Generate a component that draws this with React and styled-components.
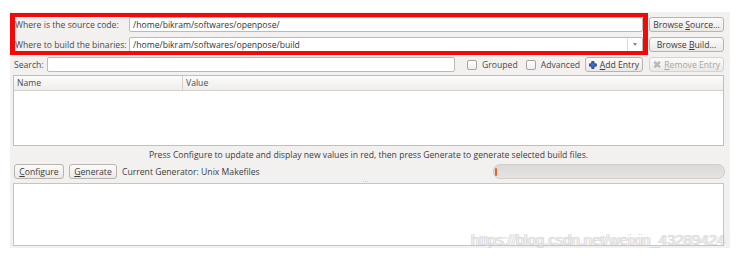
import React from "react";
import styled, { createGlobalStyle } from "styled-components";

const FONT = `"Open Sans", "Noto Sans", "DejaVu Sans", sans-serif`;
const FS = "8.65px";

const Global = createGlobalStyle`
  html, body { margin: 0; padding: 0; background: #ffffff; }
  body { font-family: ${FONT}; font-size: ${FS}; color: #3c3c3c; }
  * { box-sizing: border-box; }
`;

const Page = styled.div`
  position: relative;
  width: 750px;
  height: 258px;
  padding: 12px 0 0 10px;
`;

const Window = styled.div`
  width: 720px;
  height: 236px;
  background: #f2f1f0;
  padding: 5px 6px 2px 3px;
  display: flex;
  flex-direction: column;
`;

const TopGrid = styled.div`
  display: grid;
  grid-template-columns: 110px 1fr 75px;
  grid-template-rows: 15px 15px;
  column-gap: 6px;
  row-gap: 5px;
  position: relative;
`;

const Highlight = styled.div`
  grid-column: 1 / 3;
  grid-row: 1 / 3;
  margin: -4px -5px -3px -3px;
  border-style: solid;
  border-color: #f40808;
  border-width: 4px 5px 4px 5px;
  pointer-events: none;
  z-index: 2;
`;

const Label = styled.div`
  display: flex;
  align-items: center;
  padding-left: 2px;
  white-space: nowrap;
  font-size: ${FS};
  color: #4a4a4a;
  grid-column: ${(p) => p.$col || "auto"};
  grid-row: ${(p) => p.$row || "auto"};
`;

const Field = styled.div`
  position: relative;
  display: flex;
  align-items: center;
  background: #ffffff;
  border: 1px solid #bdb9b5;
  border-radius: 2px;
  padding-left: 3px;
  font-size: ${FS};
  color: #333;
  white-space: nowrap;
  overflow: hidden;
  grid-column: ${(p) => p.$col || "auto"};
  grid-row: ${(p) => p.$row || "auto"};
`;

const FieldText = styled.span`
  flex: 1;
`;

const ComboArrow = styled.div`
  width: 15px;
  height: 100%;
  border-left: 1px solid #dcd9d6;
  display: flex;
  align-items: center;
  justify-content: center;
  &::after {
    content: "";
    border-left: 2.5px solid transparent;
    border-right: 2.5px solid transparent;
    border-top: 3px solid #8a8785;
  }
`;

const Button = styled.div`
  display: flex;
  align-items: center;
  justify-content: center;
  gap: 3px;
  height: 15px;
  padding: 0 3px;
  border: 1px solid ${(p) => (p.$disabled ? "#d6d3cf" : "#b8b4b0")};
  border-radius: 3px;
  background: linear-gradient(#fbfbfa, #ebe9e7);
  color: ${(p) => (p.$disabled ? "#a9a6a3" : "#3c3c3c")};
  font-size: ${FS};
  white-space: nowrap;
  flex: none;
  width: ${(p) => (p.$w ? `${p.$w}px` : "auto")};
  grid-column: ${(p) => p.$col || "auto"};
  grid-row: ${(p) => p.$row || "auto"};
  u { text-decoration: underline; text-underline-offset: 1px; }
`;

const SearchRow = styled.div`
  display: flex;
  align-items: center;
  height: 15px;
  margin-top: 5px;
`;

const SearchLabel = styled.div`
  width: 34px;
  padding-left: 1px;
  font-size: ${FS};
  color: #4a4a4a;
`;

const SearchField = styled.div`
  width: 408px;
  height: 15px;
  background: #fff;
  border: 1px solid #bdb9b5;
  border-radius: 2px;
`;

const Check = styled.label`
  display: flex;
  align-items: center;
  gap: 5px;
  font-size: ${FS};
  color: #4a4a4a;
  white-space: nowrap;
  margin-left: ${(p) => p.$ml}px;
  &::before {
    content: "";
    flex: none;
    width: 8px;
    height: 8px;
    border: 1px solid #a8a4a0;
    border-radius: 2px;
    background: linear-gradient(#ffffff, #f0efee);
  }
`;

const RightButtons = styled.div`
  display: flex;
  gap: 6px;
  margin-left: auto;
`;

const Table = styled.div`
  margin-top: 3px;
  height: 71px;
  background: #fff;
  border: 1px solid #c2beba;
  display: flex;
  flex-direction: column;
`;

const TableHead = styled.div`
  display: grid;
  grid-template-columns: 168px 1fr;
  height: 15px;
  background: linear-gradient(#fbfbfb, #efeeed);
  border-bottom: 1px solid #d3d0cd;
`;

const HeadCell = styled.div`
  display: flex;
  align-items: center;
  padding-left: 3px;
  font-size: ${FS};
  color: #4a4a4a;
  border-left: ${(p) => (p.$sep ? "1px solid #d3d0cd" : "none")};
`;

const Status = styled.div`
  height: 18px;
  display: flex;
  align-items: center;
  justify-content: center;
  font-size: ${FS};
  color: #3c3c3c;
`;

const ActionRow = styled.div`
  display: flex;
  align-items: center;
  gap: 5px;
  height: 15px;
  padding-left: 1px;
`;

const Generator = styled.div`
  font-size: ${FS};
  color: #3c3c3c;
`;

const Progress = styled.div`
  margin-left: auto;
  margin-right: -1px;
  width: 232px;
  height: 15px;
  border-radius: 7px;
  border: 1px solid #d0cdca;
  background: linear-gradient(#dcdad7, #e6e4e2);
  display: flex;
  align-items: center;
  padding-left: 1px;
`;

const ProgressChunk = styled.div`
  width: 2px;
  height: 8px;
  background: #e2652f;
  border-radius: 1px;
`;

const Splitter = styled.div`
  height: 4px;
  display: flex;
  justify-content: center;
  align-items: center;
  gap: 1px;
  padding-right: 6px;
  span {
    width: 1px;
    height: 1px;
    background: #d4d1ce;
  }
`;

const Output = styled.div`
  height: 63px;
  background: #fff;
  border: 1px solid #c8c4c0;
`;

const Watermark = styled.div`
  position: absolute;
  left: 470px;
  top: 231px;
  font-family: "Liberation Sans", Arial, sans-serif;
  font-size: 15px;
  letter-spacing: -0.03px;
  color: rgba(222, 222, 222, 0.95);
  text-shadow: 2px 0 0 rgba(200, 200, 200, 0.6), -1px 0 0 rgba(255, 255, 255, 0.7);
  pointer-events: none;
  white-space: nowrap;
`;

const PlusIcon = () => (
  <svg width="10" height="10" viewBox="0 0 10 10">
    <path
      d="M3.5 0.5h3v3h3v3h-3v3h-3v-3h-3v-3h3z"
      fill="#3d6fd1"
      stroke="#1f3566"
      strokeWidth="1"
      strokeLinejoin="round"
    />
  </svg>
);

const CrossIcon = () => (
  <svg width="9" height="9" viewBox="0 0 9 9">
    <path
      d="M1 2.5L2.5 1L4.5 3L6.5 1L8 2.5L6 4.5L8 6.5L6.5 8L4.5 6L2.5 8L1 6.5L3 4.5z"
      fill="#bdbab7"
      stroke="#a7a4a1"
      strokeWidth="0.6"
    />
  </svg>
);

export default function App() {
  return (
    <>
      <Global />
      <Page>
        <Window>
          <TopGrid>
            <Highlight />
            <Label $col="1" $row="1">Where is the source code:</Label>
            <Field $col="2" $row="1">
              <FieldText>/home/bikram/softwares/openpose/</FieldText>
            </Field>
            <Button $col="3" $row="1">
              <span>
                Browse <u>S</u>ource...
              </span>
            </Button>
            <Label $col="1" $row="2">Where to build the binaries:</Label>
            <Field $col="2" $row="2">
              <FieldText>/home/bikram/softwares/openpose/build</FieldText>
              <ComboArrow />
            </Field>
            <Button $col="3" $row="2">
              <span>
                Browse <u>B</u>uild...
              </span>
            </Button>
          </TopGrid>

          <SearchRow>
            <SearchLabel>Search:</SearchLabel>
            <SearchField />
            <Check $ml={12}>Grouped</Check>
            <Check $ml={8}>Advanced</Check>
            <RightButtons>
              <Button $w={58}>
                <PlusIcon />
                <span>
                  <u>A</u>dd Entry
                </span>
              </Button>
              <Button $w={75} $disabled>
                <CrossIcon />
                <span>
                  <u>R</u>emove Entry
                </span>
              </Button>
            </RightButtons>
          </SearchRow>

          <Table>
            <TableHead>
              <HeadCell>Name</HeadCell>
              <HeadCell $sep>Value</HeadCell>
            </TableHead>
          </Table>

          <Status>
            Press Configure to update and display new values in red, then press Generate to generate selected build files.
          </Status>

          <ActionRow>
            <Button $w={50}>
              <span>
                <u>C</u>onfigure
              </span>
            </Button>
            <Button $w={48}>
              <span>
                <u>G</u>enerate
              </span>
            </Button>
            <Generator>Current Generator: Unix Makefiles</Generator>
            <Progress>
              <ProgressChunk />
            </Progress>
          </ActionRow>

          <Splitter>
            <span />
            <span />
            <span />
          </Splitter>

          <Output />
        </Window>
        <Watermark>https://blog.csdn.net/weixin_43289424</Watermark>
      </Page>
    </>
  );
}
